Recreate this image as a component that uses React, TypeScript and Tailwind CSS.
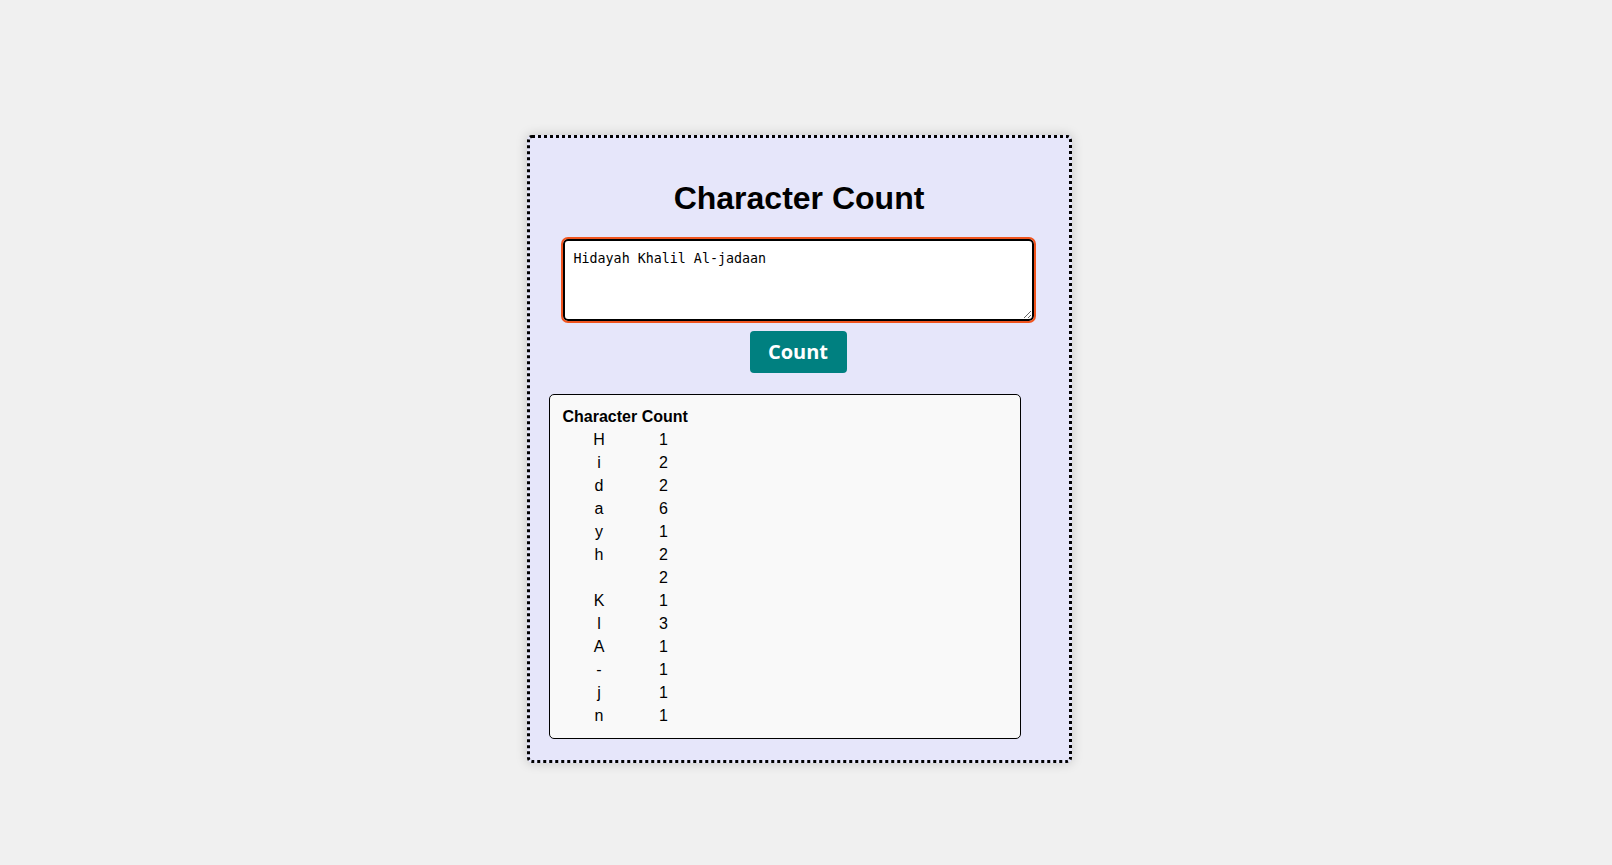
import React, { useState } from 'react';

const countChars = (text: string) => {
  const counts: { char: string; count: number }[] = [];
  for (const ch of text) {
    const found = counts.find((c) => c.char === ch);
    if (found) found.count += 1;
    else counts.push({ char: ch, count: 1 });
  }
  return counts;
};

const App = () => {
  const [text, setText] = useState('Hidayah Khalil Al-jadaan');
  const [counts, setCounts] = useState(countChars('Hidayah Khalil Al-jadaan'));

  return (
    <div className="min-h-[865px] w-full bg-[#f0f0f0] font-['Liberation_Sans',Arial,sans-serif] text-black">
      <div className="flex justify-center pt-[135px] pr-[14px]">
        <div className="w-[545px] rounded-[5px] border-[3px] border-dotted border-black bg-[#e6e6fa] px-[17px] pt-[21px] pb-[21px] shadow-[0_0_12px_rgba(0,0,0,0.18)]">
          {/* title */}
          <h1 className="mt-[21px] mb-[22px] text-center text-[32px] leading-[37px] font-bold">
            Character Count
          </h1>

          {/* input */}
          <div className="flex flex-col items-center pr-[2px]">
            <textarea
              value={text}
              onChange={(e) => setText(e.target.value)}
              spellCheck={false}
              className="block h-[82px] w-[471px] rounded-[5px] border-2 border-black bg-white py-[10px] pr-[10px] pl-[9px] font-['DejaVu_Sans_Mono',monospace] text-[13.33px] leading-[15.5px] outline-2 outline-[#f0541e] outline-solid"
            />
            <button
              onClick={() => setCounts(countChars(text))}
              className="mt-[10px] h-[42px] w-[97px] rounded-[4px] bg-[#008080] font-['Open_Sans',sans-serif] text-[20px] font-bold text-white"
            >
              Count
            </button>
          </div>

          {/* result */}
          <div className="mt-[21px] ml-[2px] w-[472px] rounded-[5px] border border-black bg-[#f9f9f9] pt-[10px] pr-[13px] pb-[11px] pl-[13px]">
            <div className="text-[16px] leading-[23px] font-bold">Character Count</div>
            {counts.map((c, i) => (
              <div key={i} className="flex text-[16px] leading-[23px]">
                <span className="w-[73px] text-center whitespace-pre">{c.char}</span>
                <span className="w-[56px] text-center">{c.count}</span>
              </div>
            ))}
          </div>
        </div>
      </div>
    </div>
  );
};

export default App;
